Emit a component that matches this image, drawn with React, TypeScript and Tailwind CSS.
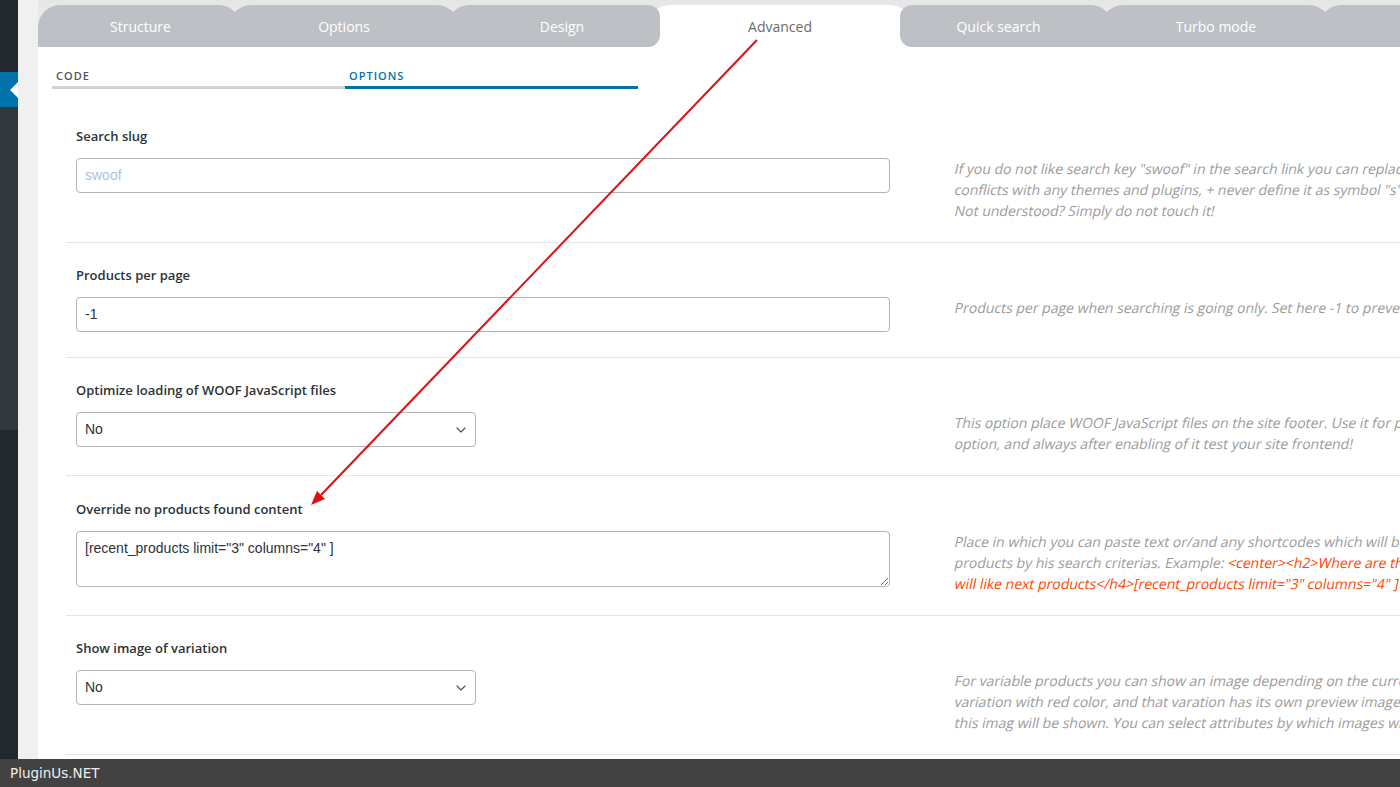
import React from "react";
import { ChevronDown } from "lucide-react";

const OPEN = "font-['Open_Sans','Noto_Sans',sans-serif]";
const ARIAL = "font-['Liberation_Sans',Arial,sans-serif]";

function Label({ children }: { children: React.ReactNode }) {
  return (
    <div className={`${OPEN} text-[13px] font-semibold leading-[20px] text-[#2c3338]`}>{children}</div>
  );
}

function Desc({ lines }: { lines: React.ReactNode[] }) {
  return (
    <div className={`${OPEN} ml-[65px] text-[14px] not-italic leading-[21px] text-[#9b9b9b] whitespace-nowrap`}>
      {lines.map((l, i) => (
        <div key={i} className="origin-left -skew-x-12">
          {l}
        </div>
      ))}
    </div>
  );
}

function TextInput({ value, placeholder }: { value?: string; placeholder?: string }) {
  return (
    <div
      className={`${ARIAL} mb-[4px] flex h-[35px] w-[814px] items-center rounded-[4px] border border-[#b4b4b4] bg-white px-[8px] text-[14px] ${
        placeholder ? "text-[#a9c3de]" : "text-[#2c3338]"
      }`}
    >
      {value ?? placeholder}
    </div>
  );
}

function SelectBox({ value }: { value: string }) {
  return (
    <div
      className={`${ARIAL} relative mb-[4px] flex h-[35px] w-[400px] items-center rounded-[4px] border border-[#b4b4b4] bg-white px-[8px] text-[14px] text-[#2c3338]`}
    >
      {value}
      <ChevronDown className="absolute right-[6px] top-[9px] text-[#50575e]" size={16} strokeWidth={1.8} />
    </div>
  );
}

function Row({
  label,
  control,
  desc,
  roomy,
}: {
  label: string;
  control: React.ReactNode;
  desc: React.ReactNode[];
  roomy?: boolean;
}) {
  return (
    <div className={`border-b border-[#e3e7ea] px-[10px] pb-[21px] ${roomy ? "pt-[23px]" : "pt-[22px]"}`}>
      <Label>{label}</Label>
      <div className="mt-[12px] flex items-start">
        <div className="w-[814px] shrink-0">{control}</div>
        <Desc lines={desc} />
      </div>
    </div>
  );
}

const red = "text-[#ff4500]";

export default function App() {
  const grey = "bg-[#bdc1c6]";
  const tabText = `${OPEN} text-[14px] text-white`;
  return (
    <div className="relative flex h-[787px] w-[1400px] flex-col overflow-hidden bg-[#f0f0f1]">
      <div className="flex min-h-0 flex-1">
        {/* admin sidebar */}
        <div className="flex w-[18px] shrink-0 flex-col">
          <div className="h-[72px] bg-[#23282d]" />
          <div className="flex h-[35px] items-center justify-end bg-[#0073aa]">
            <div className="h-0 w-0 border-y-[8px] border-r-[8px] border-y-transparent border-r-white" />
          </div>
          <div className="h-[323px] bg-[#32373c]" />
          <div className="flex-1 bg-[#23282d]" />
        </div>
        <div className="w-[20px] shrink-0 bg-[#f0f0f1]" />
        {/* main panel */}
        <div className="flex min-w-0 flex-1 flex-col overflow-hidden">
          {/* tabs */}
          <div className="flex shrink-0 bg-gradient-to-b from-[#e6e6e6] to-[#f0f0f1] pt-[5px]">
            <div className={`flex h-[42px] w-[203px] shrink-0 items-center justify-center rounded-t-[22px] pl-[2px] ${grey} ${tabText}`}>
              Structure
            </div>
            <div className={`-ml-[12px] flex h-[42px] w-[230px] shrink-0 items-center justify-center rounded-t-[22px] ${grey} ${tabText}`}>
              Options
            </div>
            <div
              className={`relative z-10 -ml-[12px] flex h-[42px] w-[213px] shrink-0 items-center justify-center rounded-tl-[22px] rounded-tr-[12px] rounded-br-[12px] pl-[17px] ${grey} ${tabText}`}
            >
              Design
            </div>
            <div
              className={`relative z-0 -mx-[12px] flex h-[42px] w-[264px] shrink-0 items-center justify-center rounded-t-[22px] bg-white ${OPEN} text-[14px] text-[#6b6b6b]`}
            >
              Advanced
            </div>
            <div
              className={`relative z-10 flex h-[42px] w-[213px] shrink-0 items-center justify-center rounded-tl-[12px] rounded-bl-[12px] rounded-tr-[22px] pr-[16px] ${grey} ${tabText}`}
            >
              Quick search
            </div>
            <div className={`relative z-10 -ml-[12px] flex h-[42px] w-[230px] shrink-0 items-center justify-center rounded-t-[22px] ${grey} ${tabText}`}>
              Turbo mode
            </div>
            <div className={`relative z-10 -ml-[12px] flex h-[42px] w-[230px] shrink-0 items-center justify-center rounded-t-[22px] ${grey} ${tabText}`}>
              Export
            </div>
          </div>
          {/* content */}
          <div className="flex-1 bg-white">
            <div className="flex pl-[14px] pt-[21px]">
              <div
                className={`${OPEN} w-[293px] border-b-[3px] border-[#d2d2d2] pb-[2px] pl-[4px] text-[11px] font-semibold leading-[16px] tracking-[1px] text-[#555]`}
              >
                CODE
              </div>
              <div
                className={`${OPEN} w-[293px] border-b-[3px] border-[#0073aa] pb-[2px] pl-[4px] text-[11px] font-semibold leading-[16px] tracking-[1px] text-[#0073aa]`}
              >
                OPTIONS
              </div>
            </div>
            <div className="ml-[28px] mt-[15px]">
              <Row
                label="Search slug"
                control={<TextInput placeholder="swoof" />}
                desc={[
                  'If you do not like search key "swoof" in the search link you can replace it by your own word. But be care to avoid',
                  'conflicts with any themes and plugins, + never define it as symbol "s".',
                  "Not understood? Simply do not touch it!",
                ]}
              />
              <Row
                label="Products per page"
                control={<TextInput value="-1" />}
                desc={["Products per page when searching is going only. Set here -1 to prevent pagination managing from here!"]}
              />
              <Row
                label="Optimize loading of WOOF JavaScript files"
                control={<SelectBox value="No" />}
                desc={[
                  "This option place WOOF JavaScript files on the site footer. Use it for page loading optimization. Be careful with this",
                  "option, and always after enabling of it test your site frontend!",
                ]}
              />
              <Row
                roomy
                label="Override no products found content"
                control={
                  <textarea
                    readOnly
                    value={'[recent_products limit="3" columns="4" ]'}
                    className={`${ARIAL} block h-[56px] w-[814px] rounded-[4px] border border-[#b4b4b4] bg-white px-[8px] pt-[7px] text-[14px] leading-[18px] text-[#2c3338] outline-none`}
                  />
                }
                desc={[
                  "Place in which you can paste text or/and any shortcodes which will be displayed when customer will not find any",
                  <>
                    products by his search criterias. Example:{" "}
                    <span className={red}>
                      {"<center><h2>Where are the products?</h2></center><h4>Perhaps you"}
                    </span>
                  </>,
                  <span className={red}>{'will like next products</h4>[recent_products limit="3" columns="4" ]'}</span>,
                ]}
              />
              <Row
                label="Show image of variation"
                control={<SelectBox value="No" />}
                desc={[
                  "For variable products you can show an image depending on the current selected attributes. For example: user selected",
                  "variation with red color, and that varation has its own preview image, so when user selects red color in the filter",
                  "this imag will be shown. You can select attributes by which images will be shown.",
                ]}
              />
              <Row
                label="Hide woof top panel buttons"
                control={<SelectBox value="No" />}
                desc={["Hide woof top panel buttons in the product search results page"]}
              />
            </div>
          </div>
        </div>
      </div>
      {/* footer bar */}
      <div className="flex h-[28px] shrink-0 items-center bg-[#424242] pl-[10px] font-['DejaVu_Sans',sans-serif] text-[13.5px] text-[#eeeeee]">
        PluginUs.NET
      </div>
      {/* annotation arrow */}
      <svg className="pointer-events-none absolute left-0 top-0" width="1400" height="787" viewBox="0 0 1400 787">
        <line x1="757" y1="40" x2="321" y2="495" stroke="#dd1111" strokeWidth="2" />
        <polygon points="311,505 325,499 317,491" fill="#dd1111" />
      </svg>
    </div>
  );
}
